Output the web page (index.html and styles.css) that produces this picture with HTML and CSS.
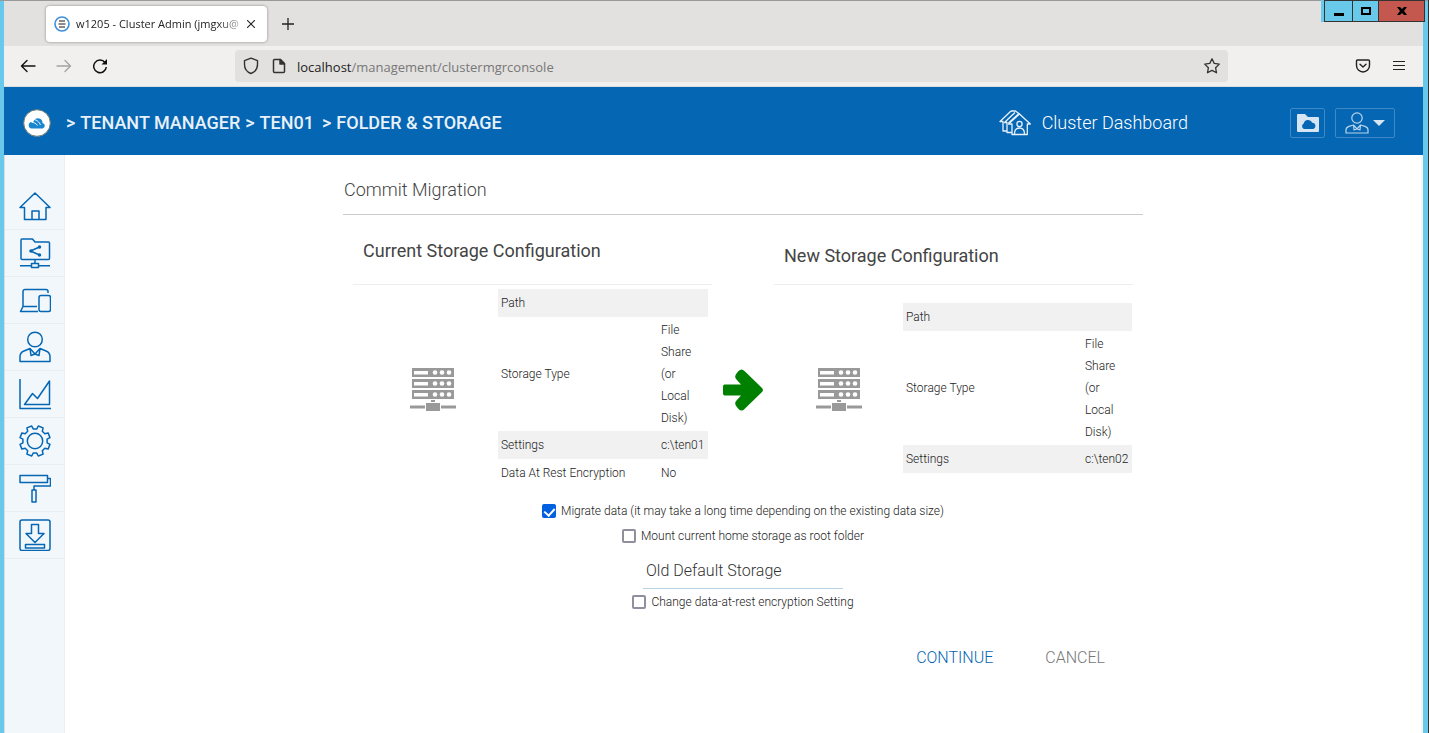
FILE: index.html
```html
<!DOCTYPE html>
<html lang="en">
<head>
    <meta charset="utf-8">
    <meta name="viewport" content="width=device-width, initial-scale=1">
    <title>w1205 - Cluster Admin</title>
    <link rel="stylesheet" href="styles.css">
</head>
<body>
<div class="window">
    <div class="window-controls">
        <button type="button" class="win-btn win-min" aria-label="Minimize"><svg width="10" height="10" viewBox="0 0 10 10"><path d="M0 7h10v3H0z"/></svg></button>
        <button type="button" class="win-btn win-max" aria-label="Maximize"><svg width="10" height="10" viewBox="0 0 10 10"><path d="M0 1h10v8H0zM2 3v4h6V3z" fill-rule="evenodd"/></svg></button>
        <button type="button" class="win-btn win-close" aria-label="Close"><svg width="10" height="10" viewBox="0 0 10 10"><path d="M0 1h3l2 2 2-2h3L7 5l3 4H7L5 7 3 9H0l3-4z"/></svg></button>
    </div>

    <div class="tab-bar">
        <div class="tab">
            <svg width="16" height="16" viewBox="0 0 16 16" fill="none"><circle cx="8" cy="8" r="7" stroke="#3d8fd8" stroke-width="1.6"/><path d="M5 5h6M4.500 8h7M5 11h6" stroke="#666" stroke-width="1.6"/></svg>
            <span class="tab-title">w1205 - Cluster Admin (jmgxu@</span>
            <button type="button" class="plain-btn" aria-label="Close tab"><svg width="8" height="8" viewBox="0 0 8 8"><path d="M0 0l8 8M8 0L0 8" stroke="#222" stroke-width="1.1"/></svg></button>
        </div>
        <button type="button" class="plain-btn new-tab" aria-label="New tab"><svg width="12" height="12" viewBox="0 0 12 12"><path d="M6 0v12M0 6h12" stroke="#222" stroke-width="1.3"/></svg></button>
    </div>

    <div class="toolbar">
        <div class="nav-buttons">
            <button type="button" class="plain-btn" aria-label="Back"><svg width="16" height="16" viewBox="0 0 16 16" fill="none" stroke="#111" stroke-width="1.4" stroke-linecap="round" stroke-linejoin="round"><path d="M15 8H2M7 2.500L1.500 8 7 13.500"/></svg></button>
            <button type="button" class="plain-btn" aria-label="Forward"><svg width="16" height="16" viewBox="0 0 16 16" fill="none" stroke="#a3a3a3" stroke-width="1.3" stroke-linecap="round" stroke-linejoin="round"><path d="M1 8h13M9 2.500L14.500 8 9 13.500"/></svg></button>
            <button type="button" class="plain-btn" aria-label="Reload"><svg width="16" height="16" viewBox="0 0 16 16" fill="none" stroke="#111" stroke-width="1.5"><path d="M13 4.500A6.300 6.300 0 1 0 14.300 9"/><path d="M15 1v5.500H9.500z" fill="#111" stroke="none"/></svg></button>
        </div>
        <div class="url-bar">
            <svg width="16" height="18" viewBox="0 0 16 18" fill="none" stroke="#333" stroke-width="1.4" stroke-linejoin="round"><path d="M8 1.200l6.500 2.500v3.800c0 4-2.500 7.500-6.500 9-4-1.500-6.500-5-6.500-9V3.700z"/></svg>
            <svg width="14" height="16" viewBox="0 0 14 16" fill="none" stroke="#333" stroke-width="1.500" stroke-linejoin="round"><path d="M2.500 1.500h6L12.500 5.500v8a1 1 0 0 1-1 1h-9a1 1 0 0 1-1-1v-11a1 1 0 0 1 1-1z"/><path d="M8 1.500v4.500h4.500z" fill="#333"/></svg>
            <span class="url"><b>localhost</b>/management/clustermgrconsole</span>
            <button type="button" class="plain-btn star" aria-label="Bookmark"><svg width="18" height="18" viewBox="0 0 18 18" fill="none" stroke="#333" stroke-width="1.300" stroke-linejoin="round"><path d="M9 1.800l2.200 4.600 5.100.7-3.700 3.600.9 5.100L9 13.400l-4.500 2.400.9-5.100L1.700 7.100l5.100-.7z"/></svg></button>
        </div>
        <div class="toolbar-end">
            <button type="button" class="plain-btn" aria-label="Pocket"><svg width="16" height="14" viewBox="0 0 16 14" fill="none" stroke="#222" stroke-width="1.400" stroke-linecap="round" stroke-linejoin="round"><path d="M2.500 1h11a1 1 0 0 1 1 1v4.500a6.500 6.500 0 0 1-13 0V2a1 1 0 0 1 1-1z"/><path d="M5 5.200l3 2.800 3-2.800"/></svg></button>
            <button type="button" class="plain-btn" aria-label="Menu"><svg width="12" height="12" viewBox="0 0 12 12"><path d="M0 1.500h12M0 5.500h12M0 9.500h12" stroke="#222" stroke-width="1.200"/></svg></button>
        </div>
    </div>

    <header class="header">
        <svg class="logo" width="28" height="28" viewBox="0 0 28 28"><circle cx="14" cy="14" r="13.300" fill="#fff" stroke="#6d7f74"/><path d="M8.500 19.500a3.300 3.300 0 0 1-.6-6.400c.8-.2 1.600 0 2.400.4.200-1.700 1-3 2.300-3.700 2.200-1.300 5.200-.6 6.300 1.700.5.900.6 1.600.6 2.400a2.900 2.900 0 0 1 .3 5.600z" fill="#1a86cf"/><path d="M11 10.500c3 .5 5.400 2.500 6.500 5.500M8.500 13.200c2.500.1 4.600 1.300 6 3.300" fill="none" stroke="#fff" stroke-width=".9"/></svg>
        <nav class="breadcrumb">
            <span>&gt;</span>
            <a href="#">TENANT MANAGER</a>
            <span>&gt;</span>
            <a href="#" class="tenant">TEN01</a>
            <span>&gt;</span>
            <a href="#">FOLDER &amp; STORAGE</a>
        </nav>
        <a href="#" class="dashboard">
            <svg width="32" height="26" viewBox="0 0 32 26" fill="none" stroke="#e8f1f9" stroke-width="1.300" stroke-linejoin="round"><path d="M9.500 14L20.500 4 31.300 14h-3v10.500H13V14z"/><path d="M16 2.500L5.500 12.500H8v10h5M12 1L1 11.500h3v9.500h4M8 12.500v8M12 1h4.500L20.500 4M16 2.500L8 10M20 3.500L9.500 13"/><circle cx="20.500" cy="14" r="2.600"/><path d="M15.500 24c0-4 2-6 5-6s5 2 5 6"/></svg>
            Cluster Dashboard
        </a>
        <button type="button" class="head-btn folder-btn" aria-label="Cloud folder"><svg width="22" height="18" viewBox="0 0 22 18"><path d="M0 1a1 1 0 0 1 1-1h7l3 3h10a1 1 0 0 1 1 1v13a1 1 0 0 1-1 1H1a1 1 0 0 1-1-1z" fill="#d5e5f3"/><path d="M7 15a3 3 0 0 1-.3-5.500 4.600 4.600 0 0 1 8.600-.8 3.200 3.200 0 0 1 .7 6.300z" fill="#0566b3"/></svg></button>
        <button type="button" class="head-btn user-btn" aria-label="Account">
            <svg width="24" height="22" viewBox="0 0 24 22" fill="none" stroke="#b9d4eb" stroke-width="1.200" stroke-linejoin="round"><circle cx="12" cy="6" r="5.200"/><path d="M1 21v-3c0-2 1-3 3-3.600L8.500 13l3.500 4 3.500-4 4.500 1.400c2 .6 3 1.600 3 3.600v3zM8.500 13l.5 5 3-1 3 1 .5-5"/></svg>
            <svg width="12" height="6" viewBox="0 0 12 6"><path d="M0 0h12L6 6z" fill="#d5e5f3"/></svg>
        </button>
    </header>

    <div class="page">
        <nav class="sidebar">
            <a href="#" aria-label="Home"><svg viewBox="0 0 32 32"><path d="M1 17.500L16 3l15 14.500h-4V29.500h-7V21h-7v8.500H5.500v-12zM13 29.500h7"/></svg></a>
            <a href="#" aria-label="Shared folders"><svg viewBox="0 0 32 32"><path d="M2 3a1 1 0 0 1 1-1h10.500l2.500 3h13.500a1 1 0 0 1 1 1v15.500a1 1 0 0 1-1 1H3a1 1 0 0 1-1-1zM16 22.500v4M12.500 26.500h7v4h-7zM1 28.700h11.500M19.500 28.700H31M20.500 10l-9 4 9 4"/><g class="dot"><circle cx="12" cy="14" r="1"/><circle cx="20.500" cy="10" r="1"/><circle cx="20.500" cy="18" r="1"/></g></svg></a>
            <a href="#" aria-label="Devices"><svg viewBox="0 0 32 32"><path d="M4 22.500V7.500a2 2 0 0 1 2-2h21a2 2 0 0 1 2 2V9M19 27.500H1.500l2.500-5h14"/><rect x="20" y="11.500" width="11.500" height="16" rx="2"/></svg></a>
            <a href="#" aria-label="Users"><svg viewBox="0 0 32 32"><circle cx="16" cy="8.500" r="7.300"/><path d="M1 30.500v-5c0-3 1.500-4.500 4-5.500l6-2.500 5 5.500 5-5.500 6 2.500c2.500 1 4 2.500 4 5.500v5zM11 17.500l1 7 4-1.500 4 1.500 1-7"/></svg></a>
            <a href="#" aria-label="Reports"><svg viewBox="0 0 32 32"><path d="M1 1v29.500h31M5.500 26.500l8-11 5 5L30.500 3v23.500z"/></svg></a>
            <a href="#" aria-label="Settings"><svg viewBox="0 0 32 32"><path d="M28.100 17.800L31 19.300l-1.900 4.800-3.300-.8-2.500 2.500.8 3.300-4.800 1.900-1.500-2.900h-3.600L12.700 31l-4.800-1.900.8-3.300-2.500-2.500-3.300.8L1 19.300l2.900-1.500v-3.600L1 12.700l1.900-4.800 3.300.8 2.500-2.500-.8-3.300L12.700 1l1.500 2.900h3.600L19.300 1l4.800 1.900-.8 3.300 2.500 2.500 3.300-.8 1.900 4.800-2.900 1.500z"/><circle cx="16" cy="16" r="7.700"/></svg></a>
            <a href="#" aria-label="Branding"><svg viewBox="0 0 32 32"><path d="M1 3.500h27.500v7H1zM28.500 6.500h3v7.500H15v4M13 18h4v12h-4z"/></svg></a>
            <a href="#" aria-label="Downloads"><svg viewBox="0 0 32 32"><rect x="1" y="1" width="30" height="30.500" rx="2"/><path d="M12.500 5.500h7v9H25l-9 9-9-9h5.500zM6.500 25.500h19V29h-19z"/></svg></a>
        </nav>

        <main class="content">
            <form class="panel">
                <h1 class="title">Commit Migration</h1>

                <div class="compare">
                    <section>
                        <h2 class="storage-head">Current Storage Configuration</h2>
                        <div class="storage current">
                            <svg class="server" width="46" height="44" viewBox="0 0 46 44"><path d="M2 1h42v9H2zM2 12h42v9H2zM2 23h42v9H2zM21 33h4v2h-4zM16 36h14v8H16zM0 38.500h15v3H0zM31 38.500h15v3H31z"/><g class="holes"><path d="M4 4h14v3.500H4zM4 15h14v3.500H4zM4 26h14v3.500H4z"/><circle cx="25" cy="5.500" r="2.300"/><circle cx="32" cy="5.500" r="2.300"/><circle cx="39" cy="5.500" r="2.300"/><circle cx="25" cy="16.500" r="2.300"/><circle cx="32" cy="16.500" r="2.300"/><circle cx="39" cy="16.500" r="2.300"/><circle cx="25" cy="27.500" r="2.300"/><circle cx="32" cy="27.500" r="2.300"/><circle cx="39" cy="27.500" r="2.300"/></g></svg>
                            <table>
                                <tr><th scope="row">Path</th><td></td></tr>
                                <tr class="type"><th scope="row">Storage Type</th><td>File Share (or Local Disk)</td></tr>
                                <tr><th scope="row">Settings</th><td>c:\ten01</td></tr>
                                <tr><th scope="row">Data At Rest Encryption</th><td>No</td></tr>
                            </table>
                        </div>
                    </section>

                    <svg class="arrow" width="42" height="44" viewBox="0 0 42 44"><path d="M2.500 16.500H19L14.500 11.500C12.500 9.500 13 7.500 14.500 5.500L16.500 3C18.500 1 20.500 1 22.500 3L40 20C41.300 21.300 41.300 22.700 40 24L22.500 41C20.500 43 18.500 43 16.500 41L14.500 38.500C13 36.500 12.500 34.500 14.500 32.500L19 27.500H2.500C1.500 27.500 1 26.500 1 25V19C1 17.500 1.500 16.500 2.500 16.500z" fill="#008000"/></svg>

                    <section>
                        <h2 class="storage-head new-head">New Storage Configuration</h2>
                        <div class="storage new">
                            <svg class="server" width="46" height="44" viewBox="0 0 46 44"><path d="M2 1h42v9H2zM2 12h42v9H2zM2 23h42v9H2zM21 33h4v2h-4zM16 36h14v8H16zM0 38.500h15v3H0zM31 38.500h15v3H31z"/><g class="holes"><path d="M4 4h14v3.500H4zM4 15h14v3.500H4zM4 26h14v3.500H4z"/><circle cx="25" cy="5.500" r="2.300"/><circle cx="32" cy="5.500" r="2.300"/><circle cx="39" cy="5.500" r="2.300"/><circle cx="25" cy="16.500" r="2.300"/><circle cx="32" cy="16.500" r="2.300"/><circle cx="39" cy="16.500" r="2.300"/><circle cx="25" cy="27.500" r="2.300"/><circle cx="32" cy="27.500" r="2.300"/><circle cx="39" cy="27.500" r="2.300"/></g></svg>
                            <table>
                                <tr><th scope="row">Path</th><td></td></tr>
                                <tr class="type"><th scope="row">Storage Type</th><td>File Share (or Local Disk)</td></tr>
                                <tr><th scope="row">Settings</th><td>c:\ten02</td></tr>
                            </table>
                        </div>
                    </section>
                </div>

                <div class="options">
                    <label class="check"><input type="checkbox" name="migrate" checked> Migrate data (it may take a long time depending on the existing data size)</label>
                    <label class="check"><input type="checkbox" name="mount"> Mount current home storage as root folder</label>
                    <input type="text" class="old-name" name="oldName" aria-label="Old storage folder name" value="Old Default Storage">
                    <label class="check"><input type="checkbox" name="encryption"> Change data-at-rest encryption Setting</label>
                </div>

                <div class="actions">
                    <button type="submit" class="action primary">CONTINUE</button>
                    <button type="button" class="action">CANCEL</button>
                </div>
            </form>
        </main>
    </div>
</div>
</body>
</html>
```
FILE: styles.css
```css
* {
    box-sizing: border-box;
}
body {
    margin: 0;
    font-family: Roboto, "Liberation Sans", sans-serif;
    color: #444;
    background-color: #fff;
}
a {
    color: inherit;
    text-decoration: none;
}
button {
    font-family: inherit;
    cursor: pointer;
}
svg {
    display: block;
    flex-shrink: 0;
}

/* window frame */
.window {
    position: relative;
    display: flex;
    flex-direction: column;
    min-height: 100vh;
    padding: 1px 5px 0 4px;
    background-color: #69c9ea;
    border-right: 1px solid #333;
}
.window::before {
    content: "";
    position: absolute;
    top: 0;
    left: 0;
    right: 0;
    height: 1px;
    background-color: #999;
}
.window-controls {
    position: absolute;
    top: 0;
    right: 3px;
    display: flex;
    padding-left: 3px;
    background-color: #69c9ea;
}
.win-btn {
    display: flex;
    align-items: center;
    justify-content: center;
    height: 22px;
    padding: 0;
    background-color: #69c9ea;
    border: 1px solid #333;
    border-left-width: 0;
}
.win-min {
    width: 29px;
    border-left-width: 1px;
}
.win-max {
    width: 26px;
}
.win-close {
    width: 46px;
    background-color: #c4584f;
}
.plain-btn {
    display: flex;
    padding: 0;
    background: none;
    border: none;
}
.tab-bar {
    display: flex;
    align-items: center;
    height: 45px;
    padding: 0 42px;
    background-color: #e2e1df;
}
.tab {
    display: flex;
    align-items: center;
    gap: 6px;
    width: 221px;
    height: 36px;
    padding: 0 12px 0 8px;
    background-color: #fff;
    border-radius: 4px;
    box-shadow: 0 0 3px rgba(0, 0, 0, 0.4);
}
.tab-title {
    flex: 1;
    white-space: nowrap;
    font: 11px "Open Sans", "Noto Sans", sans-serif;
    color: #222;
    -webkit-mask-image: linear-gradient(to right, #000 85%, rgba(0, 0, 0, 0.3));
    mask-image: linear-gradient(to right, #000 85%, rgba(0, 0, 0, 0.3));
}
.new-tab {
    margin-left: 15px;
}
.toolbar {
    display: flex;
    align-items: center;
    height: 41px;
    padding: 0 18px 0 16px;
    background-color: #f1f0ee;
    border-bottom: 1px solid #ddd;
}
.nav-buttons {
    display: flex;
    gap: 20px;
    width: 215px;
}
.url-bar {
    display: flex;
    align-items: center;
    flex: 1;
    max-width: 993px;
    height: 32px;
    padding: 0 7px 0 8px;
    background-color: #e2e1df;
    border-radius: 4px;
}
.url-bar svg + svg {
    margin-left: 13px;
}
.url {
    margin-left: 11px;
    padding-top: 2px;
    font: 13px "Open Sans", "Noto Sans", sans-serif;
    color: #777;
}
.url b {
    font-weight: 400;
    color: #222;
}
.star {
    margin-left: auto;
}
.toolbar-end {
    display: flex;
    align-items: center;
    gap: 22px;
    margin-left: auto;
}

/* header */
.header {
    display: flex;
    align-items: center;
    height: 68px;
    padding: 3px 28px 0 19px;
    color: #e8f1f9;
    background-color: #0566b3;
}
.breadcrumb {
    display: flex;
    gap: 5px;
    margin-left: 15px;
    font-size: 18px;
    font-weight: 500;
}
.tenant {
    margin-right: 3px;
}
.dashboard {
    display: flex;
    align-items: center;
    gap: 11px;
    margin-left: auto;
    margin-right: 102px;
    font-size: 18px;
    font-weight: 300;
    color: #fff;
}
.head-btn {
    display: flex;
    align-items: center;
    justify-content: center;
    gap: 4px;
    height: 30px;
    padding: 0;
    background: none;
    border: 1px solid #3d88c5;
    border-radius: 2px;
}
.folder-btn {
    width: 35px;
    margin-right: 10px;
}
.user-btn {
    width: 60px;
}

/* page */
.page {
    display: flex;
    flex: 1;
    background-color: #fff;
}
.sidebar {
    width: 61px;
    padding-top: 28px;
    background-color: #f2f7fb;
    border-left: 1px solid #ddd;
    border-right: 1px solid #eee;
}
.sidebar a {
    display: flex;
    align-items: center;
    justify-content: center;
    height: 47px;
    border-bottom: 1px solid #e9eef2;
}
.sidebar svg {
    width: 32px;
    height: 32px;
    fill: none;
    stroke: #0566b3;
    stroke-width: 1.5;
    stroke-linejoin: round;
}
.sidebar .dot {
    fill: #0566b3;
}
.content {
    flex: 1;
    padding: 0 16px;
    border-right: 2px solid #f5f5f5;
}
.panel {
    max-width: 800px;
    margin: 0 auto;
}
.title {
    height: 60px;
    margin: 0;
    padding: 24px 1px 0;
    border-bottom: 1px solid #ccc;
    font-size: 18px;
    line-height: 22px;
    font-weight: 300;
    color: #444;
}
.compare {
    display: grid;
    grid-template-columns: 1fr 62px 1fr;
    padding: 0 10px;
}
.storage-head {
    height: 70px;
    margin: 0;
    padding: 25px 10px 0;
    border-bottom: 1px solid #eee;
    font-size: 18px;
    line-height: 22px;
    font-weight: 400;
    color: #444;
}
.new-head {
    padding-top: 30px;
}
.storage {
    display: flex;
    align-items: center;
    height: 206px;
}
.current {
    padding: 0 4px 0 15px;
}
.current table {
    width: 210px;
}
.new {
    padding-right: 1px;
}
.new table {
    width: 229px;
}
.server {
    margin: 2px auto 0;
    fill: #999;
}
.holes {
    fill: #fff;
}
.storage table {
    table-layout: fixed;
    border-collapse: collapse;
    font-size: 12px;
    line-height: 22px;
    color: #222;
}
.storage th,
.storage td {
    padding: 3px;
    text-align: left;
    font-weight: 300;
}
.storage td {
    width: 50px;
}
.storage .type th,
.storage .type td {
    padding-top: 2px;
    padding-bottom: 2px;
}
.storage tr:nth-child(odd) {
    background-color: #f1f1f1;
}
.arrow {
    align-self: end;
    justify-self: center;
    margin-bottom: 79px;
}
.options {
    display: flex;
    flex-direction: column;
    align-items: center;
    padding-top: 7px;
}
.check {
    display: flex;
    align-items: center;
    gap: 5px;
    height: 25px;
    font-size: 12px;
    font-weight: 300;
    color: #222;
}
.check input {
    appearance: none;
    display: flex;
    justify-content: center;
    width: 14px;
    height: 14px;
    margin: 0;
    border: 2px solid #8f8f9d;
    border-radius: 2px;
    background-color: #fff;
}
.check input:checked {
    border-color: #0060df;
    background-color: #0060df;
}
.check input:checked::after {
    content: "";
    width: 5px;
    height: 8px;
    border: solid #fff;
    border-width: 0 2px 2px 0;
    transform: rotate(42deg);
}
.old-name {
    width: 200px;
    height: 36px;
    margin: 5px 0 0;
    padding: 0 3px;
    border: none;
    border-bottom: 1px solid #b8d4e6;
    font-family: inherit;
    font-size: 16px;
    font-weight: 300;
    color: #333;
    background: none;
}
.actions {
    display: flex;
    justify-content: flex-end;
    gap: 52px;
    padding: 34px 38px 0;
}
.action {
    padding: 0;
    border: none;
    background: none;
    font-size: 16px;
    line-height: 20px;
    font-weight: 300;
    color: #777;
}
.primary {
    color: #0566b3;
}
```
